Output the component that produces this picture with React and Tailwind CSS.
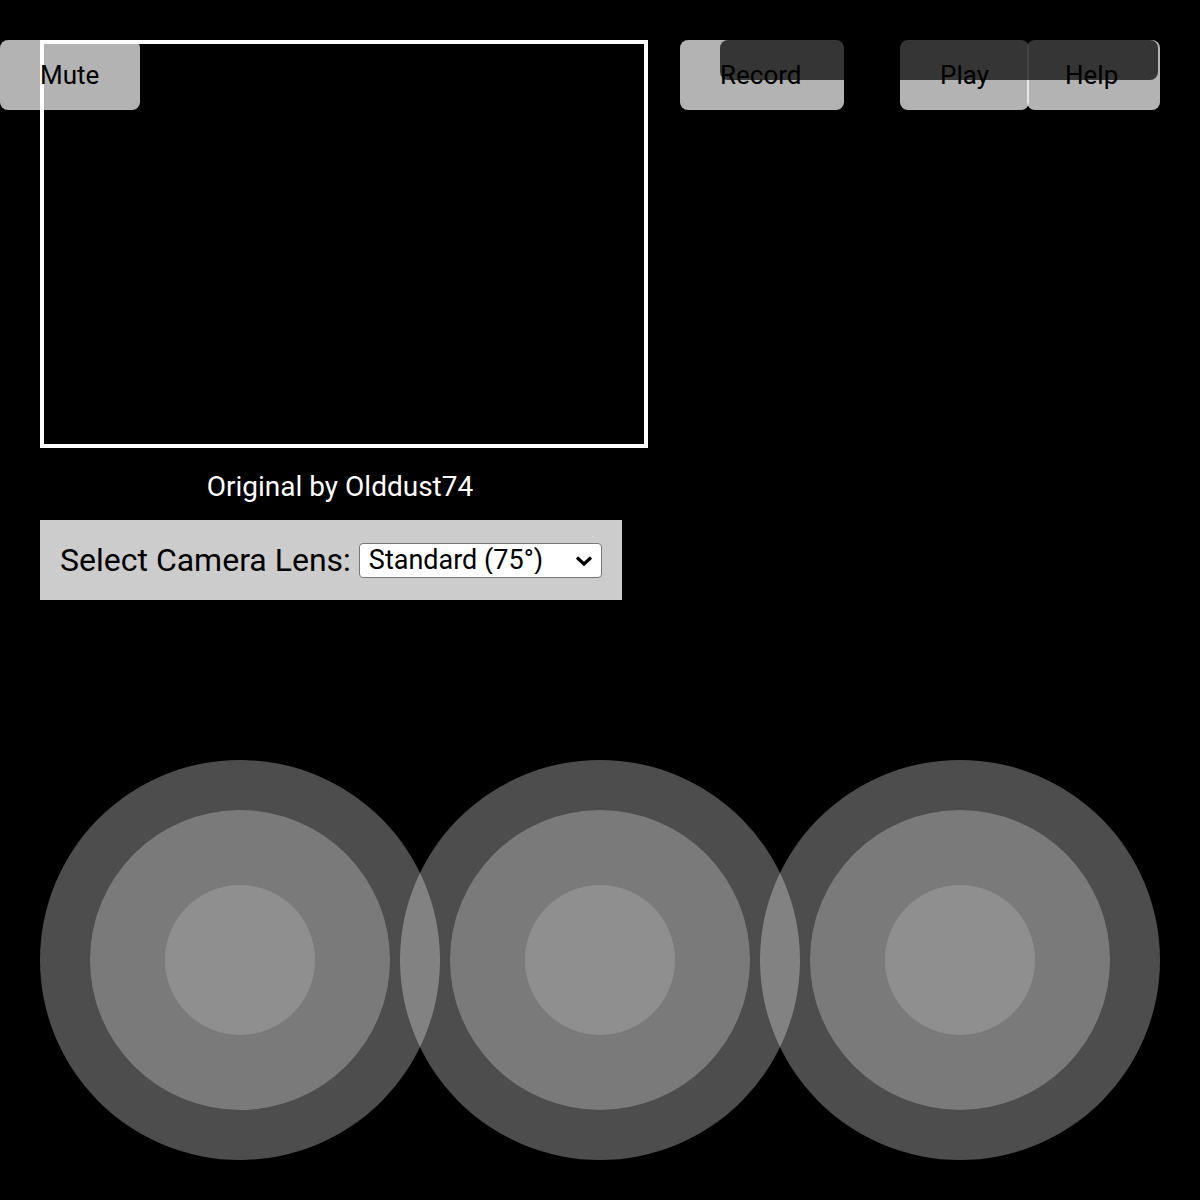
import { useState } from "react";

const lenses = ["Wide (120°)", "Standard (75°)", "Telephoto (35°)"];

function Joystick() {
  return (
    <div className="w-[400px] h-[400px] shrink-0 rounded-full bg-white/30 flex items-center justify-center">
      <div className="w-[300px] h-[300px] rounded-full bg-[#7a7a7a] flex items-center justify-center">
        <div className="w-[150px] h-[150px] rounded-full bg-[#8f8f8f]" />
      </div>
    </div>
  );
}

export default function App() {
  const [lens, setLens] = useState(lenses[1]);

  return (
    <main
      className="relative min-h-[1200px] bg-black pt-10 pl-10 text-white"
      style={{ fontFamily: "Roboto, 'Liberation Sans', sans-serif" }}
    >
      {/* view */}
      <div className="w-[608px] h-[408px] border-4 border-white bg-black" />

      <p className="w-[600px] mt-[23px] text-center text-[28px] leading-[32px]">
        Original by Olddust74
      </p>

      <div className="mt-[17px] w-[582px] h-[80px] bg-[#cccccc] flex items-center pl-5 gap-2 text-black">
        <label className="text-[32px] leading-none">Select Camera Lens:</label>
        <div className="relative">
          <select
            value={lens}
            onChange={(e) => setLens(e.target.value)}
            className="appearance-none w-[243px] h-[35px] bg-white border border-[#767676] rounded-[4px] text-[27px] leading-none pl-[9px] text-black"
          >
            {lenses.map((l) => (
              <option key={l}>{l}</option>
            ))}
          </select>
          <svg
            className="absolute right-[9px] top-[12px] pointer-events-none"
            width="18"
            height="12"
            viewBox="0 0 18 12"
          >
            <path d="M2 2.5 L9 9 L16 2.5" fill="none" stroke="#000" strokeWidth="3.2" />
          </svg>
        </div>
      </div>

      {/* joysticks */}
      <div className="mt-[160px] flex">
        <Joystick />
        <div className="-ml-10">
          <Joystick />
        </div>
        <div className="-ml-10">
          <Joystick />
        </div>
      </div>

      {/* toolbar */}
      <div className="absolute top-10 left-0 flex text-black text-[26px]">
        <button className="h-[70px] w-[140px] rounded-lg bg-white/70 px-10 text-left">Mute</button>
        <button className="ml-[540px] h-[70px] w-[164px] rounded-lg bg-white/70 px-10 text-left">Record</button>
        <button className="ml-[56px] h-[70px] w-[129px] rounded-lg bg-white/70 px-10 text-left">Play</button>
        <button className="-ml-[2px] h-[70px] w-[133px] rounded-lg bg-white/70 pl-[38px] text-left">Help</button>
      </div>
      <div className="absolute top-10 left-[720px] w-[438px] h-10 rounded-lg bg-black/70 pointer-events-none" />
    </main>
  );
}
